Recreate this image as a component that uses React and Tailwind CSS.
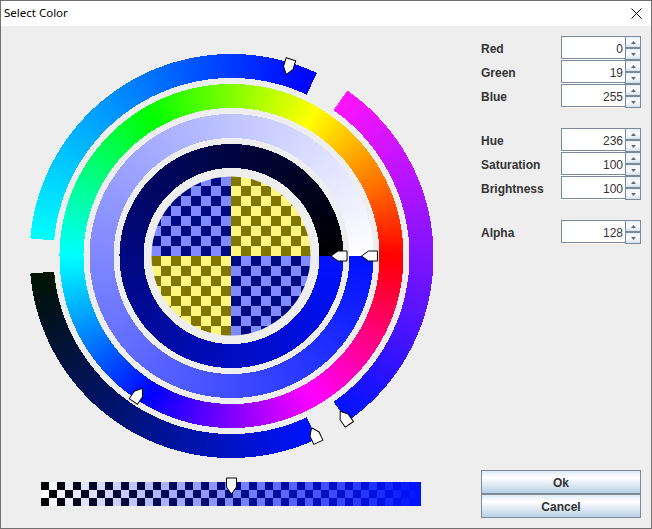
import React from "react";

const CX = 231.5;
const CY = 256;
const BLUE = [0, 19, 255];

function hsb(h, s, v) {
  const c = v * s;
  const x = c * (1 - Math.abs(((h / 60) % 2) - 1));
  const m = v - c;
  const t = [[c, x, 0], [x, c, 0], [0, c, x], [0, x, c], [x, 0, c], [c, 0, x]][Math.min(5, Math.floor(h / 60))];
  return `rgb(${Math.round((t[0] + m) * 255)},${Math.round((t[1] + m) * 255)},${Math.round((t[2] + m) * 255)})`;
}

function pt(r, deg) {
  const a = (deg * Math.PI) / 180;
  return `${(CX + r * Math.cos(a)).toFixed(2)},${(CY - r * Math.sin(a)).toFixed(2)}`;
}

function Ring({ r0, r1, from, to, color }) {
  const step = 0.5;
  const n = Math.round((to - from) / step);
  const items = [];
  for (let i = 0; i < n; i++) {
    const a = from + i * step;
    const b = Math.min(to, a + step + 0.35);
    const mid = (i + 0.5) / n;
    items.push(
      <polygon key={i} points={`${pt(r0, a)} ${pt(r1, a)} ${pt(r1, b)} ${pt(r0, b)}`} fill={color(mid)} />
    );
  }
  return <g shapeRendering="crispEdges">{items}</g>;
}

function Marker({ x, y, rot }) {
  return (
    <path
      d="M0 0 L7 -5 L16 -5 L16 5 L7 5 Z"
      transform={`translate(${x} ${y}) rotate(${rot})`}
      fill="#ffffff"
      stroke="#000000"
      strokeWidth="1"
      strokeLinejoin="round"
    />
  );
}

function RingMarker({ r, deg }) {
  const a = (deg * Math.PI) / 180;
  return <Marker x={CX + r * Math.cos(a)} y={CY - r * Math.sin(a)} rot={-deg} />;
}

function Checker() {
  const cells = [];
  for (let row = -8; row < 8; row++) {
    for (let col = -8; col < 8; col++) {
      const dark = ((col + row) % 2 + 2) % 2 === 0;
      const blue = (col < 0) === (row < 0);
      const fill = blue ? (dark ? "#000a80" : "#8089ff") : dark ? "#807600" : "#fff680";
      cells.push(<rect key={`${row}_${col}`} x={231 + col * 10} y={256 + row * 10} width="10" height="10" fill={fill} />);
    }
  }
  return (
    <g>
      <clipPath id="checker-clip">
        <circle cx="231" cy="256" r="79.5" />
      </clipPath>
      <g clipPath="url(#checker-clip)" shapeRendering="crispEdges">{cells}</g>
    </g>
  );
}

function AlphaBar() {
  const cells = [];
  for (let row = 0; row < 3; row++) {
    for (let col = 0; col < 48; col++) {
      const x = 41 + col * 8;
      const w = Math.min(8, 421 - x);
      const t = (col + 0.5) * 8 / 380;
      const under = (col + row) % 2 === 0 ? 0 : 255;
      const c = BLUE.map((v) => Math.round(v * t + under * (1 - t)));
      cells.push(<rect key={`${row}_${col}`} x={x} y={482 + row * 8} width={w} height="8" fill={`rgb(${c.join(",")})`} />);
    }
  }
  return <g shapeRendering="crispEdges">{cells}</g>;
}

function Wheel() {
  return (
    <svg width="470" height="502" viewBox="1 26 470 502" className="block shrink-0">
      <Ring r0={178} r1={202} from={65} to={175} color={(t) => `rgb(0,${Math.round(255 * t)},255)`} />
      <Ring r0={178} r1={202} from={-55} to={55} color={(t) => `rgb(${Math.round(255 * t)},19,255)`} />
      <Ring r0={178} r1={202} from={185} to={295} color={(t) => `rgb(0,19,${Math.round(255 * t)})`} />
      <Ring r0={148} r1={172} from={0} to={360} color={(t) => hsb(t * 360, 1, 1)} />
      <Ring r0={118} r1={142} from={0} to={360} color={(t) => hsb(236, t, 1)} />
      <Ring r0={88} r1={112} from={0} to={360} color={(t) => hsb(236, 1, t)} />
      <Checker />
      <AlphaBar />
      <RingMarker r={99.5} deg={0} />
      <RingMarker r={130} deg={0} />
      <RingMarker r={159.5} deg={236} />
      <RingMarker r={189.5} deg={73.2} />
      <RingMarker r={189.5} deg={-55} />
      <RingMarker r={189.5} deg={295} />
      <Marker x={231.5} y={494} rot={-90} />
    </svg>
  );
}

function SpinButton({ up }) {
  return (
    <div className="flex h-3 items-center justify-center border border-[#7a8a99] bg-gradient-to-b from-[#e6eef6] via-[#ffffff] to-[#d3e0ed]">
      <svg width="5" height="3" viewBox="0 0 5 3" className="block">
        <path d={up ? "M2.5 0 L5 3 L0 3 Z" : "M2.5 3 L5 0 L0 0 Z"} fill="#5b6670" />
      </svg>
    </div>
  );
}

function Spinner({ label, value }) {
  return (
    <div className="flex h-6 items-start">
      <div className="flex h-6 w-20 items-center pt-0.5 text-xs font-bold text-[#333333]">{label}</div>
      <div className="h-6 w-16 border-b border-white">
        <div className="flex h-[23px] items-center justify-end border-y border-l border-[#7a8a99] bg-white pr-0.5 pt-0.5 text-xs text-[#333333]">
          {value}
        </div>
      </div>
      <div className="flex w-4 flex-col">
        <SpinButton up />
        <SpinButton />
      </div>
    </div>
  );
}

function ActionButton({ children }) {
  return (
    <div className="flex h-6 items-center justify-center border border-[#7a8a99] bg-gradient-to-b from-[#dde8f3] via-[#ffffff] via-30% to-[#b8cfe5] pt-0.5 text-xs font-bold text-[#333333]">
      {children}
    </div>
  );
}

const groups = [
  [["Red", 0], ["Green", 19], ["Blue", 255]],
  [["Hue", 236], ["Saturation", 100], ["Brightness", 100]],
  [["Alpha", 128]],
];

export default function App() {
  return (
    <div className="flex h-[529px] w-[652px] flex-col border border-[#707070] bg-[#eeeeee] font-['Liberation_Sans',sans-serif]">
      <div className="flex h-[25px] shrink-0 items-center justify-between bg-white pl-[3px] pr-[9px]">
        <span className="pb-0.5 text-[11.5px] text-black font-['Noto_Sans',sans-serif]">Select Color</span>
        <svg width="11" height="11" viewBox="0 0 11 11" className="block">
          <path d="M0.5 0.5 L10.5 10.5 M10.5 0.5 L0.5 10.5" stroke="#111111" strokeWidth="1" fill="none" />
        </svg>
      </div>
      <div className="flex min-h-0 flex-1">
        <Wheel />
        <div className="ml-2.5 flex w-40 flex-col justify-between pb-2.5 pt-2.5">
          <div className="flex flex-col gap-5">
            {groups.map((g, i) => (
              <div key={i} className="flex flex-col">
                {g.map(([l, v]) => (
                  <Spinner key={l} label={l} value={v} />
                ))}
              </div>
            ))}
          </div>
          <div className="flex flex-col">
            <ActionButton>Ok</ActionButton>
            <ActionButton>Cancel</ActionButton>
          </div>
        </div>
      </div>
    </div>
  );
}
